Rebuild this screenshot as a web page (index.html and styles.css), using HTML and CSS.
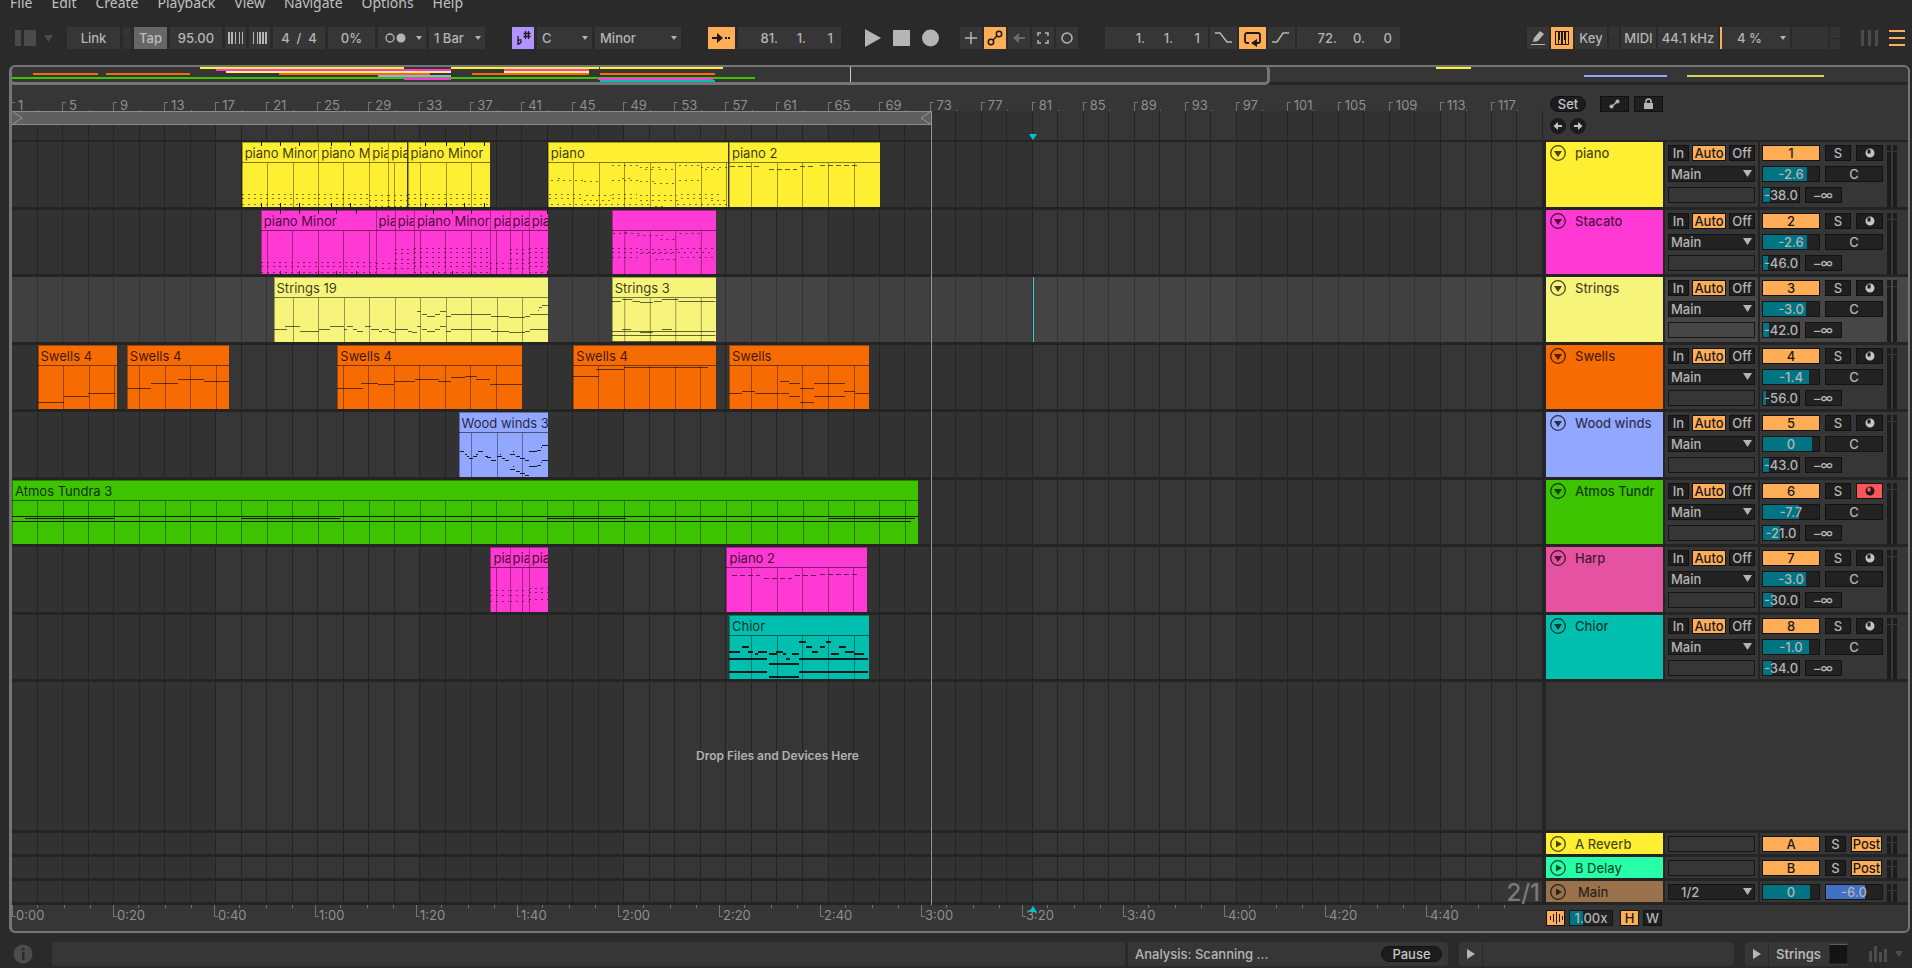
FILE: index.html
```html
<!DOCTYPE html>
<html lang="en">
<head>
<meta charset="utf-8">
<title>Arrangement</title>
<link rel="stylesheet" href="styles.css">
</head>
<body>
<nav class="menu">
  <a href="#">File</a><a href="#">Edit</a><a href="#">Create</a><a href="#">Playback</a><a href="#">View</a><a href="#">Navigate</a><a href="#">Options</a><a href="#">Help</a>
</nav>

<header class="toolbar">
  <div class="group">
    <button class="plain" aria-label="Browser"><svg width="40" height="22"><path d="M0 3h6v16h-6zM9 3h12v16h-12zM29 8h9l-4.500 7z" fill="#4a4a4a"/></svg></button>
  </div>
  <div class="group tempo">
    <button class="w-link">Link</button>
    <span class="nudge"><i></i><i></i></span>
    <button class="tap">Tap</button>
    <input class="w-tempo" value="95.00" aria-label="Tempo">
    <button class="sq" aria-label="Nudge down"><svg width="21" height="22"><path d="M4 5v12M7 5v12" stroke="#b5b5b5" stroke-width="2"/><path d="M10.500 5v12M14.500 5v12M17.500 5v12" stroke="#b5b5b5"/></svg></button>
    <button class="sq" aria-label="Nudge up"><svg width="21" height="22"><path d="M4.500 5v12M8.500 5v12" stroke="#b5b5b5"/><path d="M11 5v12M14 5v12M17 5v12" stroke="#b5b5b5" stroke-width="2"/></svg></button>
    <input class="w-tempo" value="4&nbsp; /&nbsp; 4" aria-label="Time signature">
    <input class="w-swing" value="0%" aria-label="Groove">
    <button class="w-metro" aria-label="Metronome"><svg width="48" height="22"><circle cx="12" cy="11" r="4" fill="none" stroke="#b5b5b5" stroke-width="1.300"/><circle cx="23" cy="11" r="4.500" fill="#b5b5b5"/><path d="M38 9h6l-3 4z" fill="#b5b5b5"/></svg></button>
    <span class="pick w-bar"><select aria-label="Quantization"><option>1 Bar</option></select><svg width="6" height="4"><path d="M0 0h6l-3 4z"/></svg></span>
  </div>
  <div class="group far">
    <button class="sq violet" aria-label="Scale"><svg width="22" height="22"><path d="M6 9v9M6 17.500q4-2 3-4t-3 1M13.500 4v8M16.500 4v8M11.500 6.500h7M11.500 9.500h7" stroke="#1a1a1a" stroke-width="1.300" fill="none"/></svg></button>
    <span class="pick w-root"><select aria-label="Root"><option>C</option></select><svg width="6" height="4"><path d="M0 0h6l-3 4z"/></svg></span>
    <span class="pick w-scale"><select aria-label="Scale name"><option>Minor</option></select><svg width="6" height="4"><path d="M0 0h6l-3 4z"/></svg></span>
  </div>
  <div class="group far">
    <button class="w-follow on" aria-label="Follow"><svg width="27" height="22"><path d="M4 11h7" stroke="#1a1a1a" stroke-width="2"/><path d="M9 6l6 5-6 5z" fill="#1a1a1a"/><path d="M17 10h2v2h-2zM20 10h2v2h-2z" fill="#1a1a1a"/></svg></button>
    <span class="pos"><input value="81." aria-label="Bar"><input value="1." aria-label="Beat"><input value="1" aria-label="Sixteenth"></span>
  </div>
  <div class="group transport">
    <button class="plain" aria-label="Play"><svg width="16" height="22"><path d="M0 2l16 9-16 9z" fill="#b5b5b5"/></svg></button>
    <button class="plain" aria-label="Stop"><svg width="17" height="22"><path d="M0 3h17v16H0z" fill="#b5b5b5"/></svg></button>
    <button class="plain" aria-label="Record"><svg width="17" height="22"><circle cx="8.500" cy="11" r="8.500" fill="#b5b5b5"/></svg></button>
  </div>
  <div class="group near">
    <button class="sq" aria-label="Overdub"><svg width="22" height="22"><path d="M11 5v12M5 11h12" stroke="#b5b5b5" stroke-width="1.500"/></svg></button>
    <button class="sq on" aria-label="Automation arm"><svg width="22" height="22" fill="none" stroke="#1a1a1a" stroke-width="1.500"><circle cx="7" cy="15" r="2.700"/><circle cx="15" cy="7" r="2.700"/><path d="M9 13l4-4"/></svg></button>
    <button class="sq" aria-label="Re-enable automation"><svg width="22" height="22"><path d="M8 11h9" stroke="#6a6a6a" stroke-width="2"/><path d="M11 6v10l-6-5z" fill="#6a6a6a"/></svg></button>
    <button class="sq" aria-label="Capture"><svg width="22" height="22"><path d="M6 9V6h3M13 6h3v3M16 13v3h-3M9 16H6v-3" fill="none" stroke="#b5b5b5" stroke-width="1.500"/></svg></button>
    <button class="sq" aria-label="Session record"><svg width="22" height="22"><circle cx="11" cy="11" r="5" fill="none" stroke="#b5b5b5" stroke-width="1.500"/></svg></button>
  </div>
  <div class="group far punch">
    <span class="pos"><input value="1." aria-label="Loop bar"><input value="1." aria-label="Loop beat"><input value="1" aria-label="Loop sixteenth"></span>
    <button class="w-follow" aria-label="Punch in"><svg width="27" height="22"><path d="M5 6h5l7 9h5" fill="none" stroke="#b5b5b5" stroke-width="1.500"/></svg></button>
    <button class="w-follow on" aria-label="Loop"><svg width="27" height="22"><path d="M10 16H8a2 2 0 0 1-2-2V8a2 2 0 0 1 2-2h11a2 2 0 0 1 2 2v6a2 2 0 0 1-2 2h-3" fill="none" stroke="#1a1a1a" stroke-width="1.800"/><path d="M18 12v8l-6-4z" fill="#1a1a1a"/></svg></button>
    <button class="w-follow" aria-label="Punch out"><svg width="27" height="22"><path d="M4 15h5l6-9h6" fill="none" stroke="#b5b5b5" stroke-width="1.500"/></svg></button>
    <span class="pos"><input value="72." aria-label="Length bars"><input value="0." aria-label="Length beats"><input value="0" aria-label="Length sixteenths"></span>
  </div>
  <div class="group right">
    <button class="sq" aria-label="Draw mode"><svg width="22" height="22"><path d="M6 15l1-4 6-7 4 3-6 7zM4 17h14v1H4z" fill="#b5b5b5"/></svg></button>
    <button class="sq on" aria-label="Computer keyboard"><svg width="22" height="22"><path d="M4 4h14v14H4z" fill="#1a1a1a"/><path d="M5 5h2v12H5zM15 5h2v12h-2zM8 13h2v4H8zM12 13h2v4h-2zM9 5h1v9H9zM12 5h1v9h-1z" fill="#ffad56"/></svg></button>
    <button class="w-key">Key</button>
    <span class="nudge"><i></i><i></i></span>
    <button class="w-midi">MIDI</button>
    <button class="w-rate">44.1 kHz</button>
    <button class="cpu">4 %<svg width="6" height="4"><path d="M0 0h6l-3 4z"/></svg></button>
    <span class="blank"></span>
    <span class="nudge"><i></i><i></i></span>
    <button class="plain bars" aria-label="Mixer"><svg width="17" height="22"><path d="M0 3h3v16H0zM7 3h3v16H7zM14 3h3v16h-3z" fill="#4a4a4a"/></svg></button>
    <button class="plain burger" aria-label="Arrangement view"><svg width="16" height="22"><path d="M0 3h16v2H0zM0 10h16v2H0zM0 17h16v2H0z" fill="#ffad56"/></svg></button>
  </div>
</header>

<main class="frame">
  <div class="overview"><div class="view-box"></div></div>
  <section class="arrange">
    <div class="grid"></div>
    <div class="head">
      <div class="head-time">
        <div class="ruler"></div>
        <div class="loop"><div class="loop-bar"><svg width="12" height="14"><path d="M1 1l9 6-9 6"/></svg><svg width="12" height="14"><path d="M11 1l-9 6 9 6"/></svg></div></div>
        <div class="scrub"><svg class="mark" width="8" height="6"><path d="M0 0h8l-4 6z"/></svg></div>
      </div>
      <div class="head-side">
        <div class="head-row"><button class="pill">Set</button>
          <button class="tool" aria-label="Automation mode"><svg width="27" height="14"><path d="M10 10l7-6" stroke="#b5b5b5" stroke-width="1.500"/><circle cx="10.500" cy="9.500" r="2" fill="#b5b5b5"/><circle cx="16.500" cy="4.500" r="2" fill="#b5b5b5"/></svg></button>
          <button class="tool" aria-label="Lock envelopes"><svg width="27" height="14"><path d="M9 6h9v6H9z" fill="#b5b5b5"/><path d="M11 7V4.500a2.500 2.500 0 0 1 5 0V7" fill="none" stroke="#b5b5b5" stroke-width="1.500"/></svg></button></div>
        <div class="head-row"><button class="round" aria-label="Previous locator"><svg width="16" height="16"><path d="M6 8h6" stroke="#c5c5c5" stroke-width="2"/><path d="M8 4v8L3.500 8z" fill="#c5c5c5"/></svg></button><button class="round" aria-label="Next locator"><svg width="16" height="16"><path d="M4 8h6" stroke="#c5c5c5" stroke-width="2"/><path d="M8 4v8l4.500-4z" fill="#c5c5c5"/></svg></button></div>
      </div>
    </div>
    <div class="tracks"></div>
    <div class="drop"><p>Drop Files and Devices Here</p><div class="drop-side"></div></div>
    <div class="returns">
      <div class="row small"><div class="lane"></div>
        <div class="name" style="--c:#ffef33"><button class="fold" aria-label="Unfold A"><svg width="16" height="16"><circle cx="8" cy="8" r="7.300"/><path d="M6 4.500v7l6-3.500z"/></svg></button>A Reverb</div>
        <div class="io"><input class="slot" aria-label="A input"></div>
        <div class="mix"><button class="num">A</button><button class="solo tiny">S</button><button class="post">Post</button></div></div>
      <div class="row small"><div class="lane"></div>
        <div class="name" style="--c:#26ffa8"><button class="fold" aria-label="Unfold B"><svg width="16" height="16"><circle cx="8" cy="8" r="7.300"/><path d="M6 4.500v7l6-3.500z"/></svg></button>B Delay</div>
        <div class="io"><input class="slot" aria-label="B input"></div>
        <div class="mix"><button class="num">B</button><button class="solo tiny">S</button><button class="post">Post</button></div></div>
      <div class="row small"><div class="lane zoom">2/1</div>
        <div class="name main" style="--c:#99724b"><button class="fold" aria-label="Unfold Main"><svg width="16" height="16"><circle cx="8" cy="8" r="7.300"/><path d="M6 4.500v7l6-3.500z"/></svg></button>Main</div>
        <div class="io"><span class="pick route out"><select aria-label="Main output"><option>1/2</option></select><svg width="9" height="7"><path d="M0 0h9l-4.500 7z"/></svg></span></div>
        <div class="mix"><input class="val" style="--f:84%" value="0" aria-label="Main volume"><input class="val cue" style="--f:70%" value="-6.0" aria-label="Cue volume"></div></div>
    </div>
    <div class="end-line"></div>
  </section>
  <div class="foot">
    <div class="times"></div>
    <div class="foot-side">
      <button class="wave" aria-label="Waveform"><svg width="17" height="14"><path d="M3.500 5v4M6.500 3v8M9.500 1v12M12.500 3v8M15.500 5v4" stroke="#1a1a1a"/></svg></button>
      <input class="val speed" style="--f:30%" value="1.00x" aria-label="Waveform zoom">
      <button class="hw on">H</button><button class="hw">W</button>
    </div>
  </div>
</main>

<footer class="status">
  <svg width="20" height="20"><circle cx="10" cy="10" r="9.500" fill="#4c4c4c"/><path d="M9 4h2.500v2.500H9zM9 8h2.500v8H9z" fill="#2a2a2a"/></svg>
  <div class="box info"></div>
  <div class="box scan"><span>Analysis: Scanning ...</span><button class="pill">Pause</button></div>
  <button class="box arrow first" aria-label="Show clip"><svg width="8" height="10"><path d="M0 0l8 5-8 5z"/></svg></button>
  <div class="box clipinfo"></div>
  <button class="box arrow second" aria-label="Show devices"><svg width="8" height="10"><path d="M0 0l8 5-8 5z"/></svg></button>
  <div class="box device">Strings<span></span></div>
  <svg class="levels" width="36" height="20"><path d="M1 7h3v11H1zM6 2h3v16H6zM11 8h3v10h-3zM16 5h3v13h-3zM27 7h8l-4 6z" fill="#4c4c4c"/></svg>
</footer>
<script src="app.js"></script>
</body>
</html>
```
FILE: styles.css
```css
* { box-sizing: border-box; }
body {
  margin: 0; height: 100vh; display: flex; flex-direction: column; overflow: hidden;
  background: #2a2a2a; color: #b5b5b5; font: 500 13px/16px Inter, "Open Sans", sans-serif;
}
button, input, select {
  font: inherit; color: inherit; border: 0; padding: 0; margin: 0; border-radius: 0;
  background: #363636; appearance: none; min-width: 0; outline: 0;
}
svg { display: block; flex: none; }
input { text-align: center; white-space: pre; }

.menu { display: flex; gap: 19px; height: 27px; padding-left: 10px; overflow: hidden; flex: none; }
.menu a { color: #c0c0c0; text-decoration: none; font: 400 14px/20px "Noto Sans", sans-serif; margin-top: -7px; }

.toolbar { display: flex; height: 22px; margin-bottom: 16px; padding: 0 7px 0 15px; flex: none; }
.toolbar button, .toolbar input, .toolbar select { height: 22px; }
.group { display: flex; gap: 3px; }
.group.tempo { margin-left: 12px; }
.group.far { margin-left: 27px; }
.group.near { margin-left: 21px; gap: 2px; }
.group.transport { margin-left: 24px; gap: 12px; }
.group.punch { gap: 2px; }
.group.right { margin-left: auto; gap: 2px; }
.plain, .toolbar .plain { background: none; }
.w-link { width: 53px; }
.tap { width: 33px; background: #666; color: #bbb; }
.w-tempo { width: 52px; }
.sq { width: 22px; display: flex; justify-content: center; }
.tempo .sq { width: 21px; }
.w-swing { width: 47px; }
.w-metro { width: 48px; }
.w-bar { width: 56px; }
.w-root { width: 55px; }
.w-scale { width: 86px; }
.w-follow { width: 27px; }
.w-key { width: 32px; }
.w-midi { width: 35px; }
.w-rate { width: 60px; }
.cpu { width: 70px; border-left: 2px solid #ffad56; display: flex; align-items: center; justify-content: space-between; padding: 0 4px 0 15px; }
.cpu svg { fill: #b5b5b5; }
.blank { width: 36px; background: #333; }
.bars { margin-left: 19px; }
.burger { margin-left: 9px; }
.on { background: #ffad56; color: #1a1a1a; }
.violet { background: #b394ff; }
.nudge { display: grid; grid-template-rows: 1fr 1fr; gap: 1px; width: 10px; }
.tempo .nudge { width: 8px; }
.nudge i { background: #333; }
.pos { display: flex; width: 103px; background: #363636; }
.pos input { text-align: right; width: 28px; background: none; }
.pos input:first-child { width: 40px; }
.pos input:last-child { width: 27px; }
.pick { position: relative; display: flex; }
.pick select { width: 100%; padding-left: 5px; }
.pick svg { position: absolute; right: 4px; top: 50%; margin-top: -2px; fill: #b5b5b5; pointer-events: none; }

.frame {
  flex: 1; min-height: 0; margin: 0 2px 9px 9px; display: flex; flex-direction: column;
  border: 2px solid #757575; border-left-width: 3px; border-radius: 6px; background: #363636; overflow: hidden;
}
.overview { position: relative; height: 18px; border-bottom: 3px solid #262626; flex: none; }
.overview i { position: absolute; height: 2px; }
.overview b { position: absolute; top: 0; width: 1px; height: 15px; left: 44.200%; background: #c8c8c8; }
.view-box { position: absolute; left: -3px; top: -2px; bottom: -3px; width: 66.500%; border: 2px solid #757575; border-width: 2px 3px 3px; border-radius: 5px; }

.arrange { position: relative; flex: 1; min-height: 0; display: flex; flex-direction: column; }
.grid { position: absolute; left: 0; right: 365px; top: 26px; bottom: 0; display: flex; }
.grid i { flex: 1; border-right: 1px solid #242424; background: #323232; }
.grid i.lit { background: #363636; }

.head { position: relative; display: flex; flex: none; }
.head-time { flex: 1; min-width: 0; }
.ruler { height: 26px; display: flex; color: #8f8f8f; font-weight: 400; }
.ruler span { position: relative; flex: 1 1 0; width: 0; padding: 12px 0 0 6px; }
.ruler span::before { content: ""; position: absolute; left: -1px; bottom: 0; width: 3px; height: 8px; border: solid #757575; border-width: 1px 0 0 1px; }
.ruler span::after { content: ""; position: absolute; left: 50%; bottom: 0; width: 1px; height: 1px; background: #757575; }
.loop { height: 14px; }
.loop-bar { width: 60%; height: 14px; display: flex; justify-content: space-between; background: #5f5f5f; border: solid #8c8c8c; border-width: 1px 0; }
.loop-bar svg { margin-top: -1px; fill: none; stroke: #9a9a9a; }
.scrub { position: relative; height: 17px; border-bottom: 2px solid #242424; }
.mark { position: absolute; left: 66.667%; bottom: 0; margin-left: -4px; fill: #00c2d4; }
.head-side { width: 365px; padding: 11px 0 0 7px; display: flex; flex-direction: column; gap: 6px; border-bottom: 2px solid #242424; background: #363636; }
.head-row { display: flex; gap: 4px; }
.pill { height: 16px; line-height: 14px; border-radius: 8px; background: #1c1c1c; border: 1px solid #121212; width: 36px; color: #c5c5c5; }
.head-row .pill { margin-right: 10px; }
.tool { width: 29px; height: 16px; background: #1e1e1e; border: 1px solid #121212; }
.head-row .tool + .tool { margin-left: 1px; }
.round { width: 16px; height: 16px; border-radius: 8px; background: #1c1c1c; }

.row { position: relative; display: grid; grid-template-columns: minmax(0, 1fr) 120px 95px 150px; grid-template-rows: 100%; height: 68px; }
.tracks .row:nth-child(even) { height: 67px; }
.lane { position: relative; border-bottom: 3px solid #242424; }
.selected .lane { background: rgba(255, 255, 255, .07); }
.name {
  display: flex; gap: 9px; align-items: flex-start; padding: 3px 4px; white-space: nowrap; overflow: hidden;
  background: var(--c); background-clip: padding-box; color: rgba(0, 0, 0, .72); border: solid #242424; border-width: 0 0 3px 3px;
}
.name.main { gap: 12px; }
.fold { background: none; height: 16px; }
.fold svg { fill: none; stroke: rgba(0, 0, 0, .72); stroke-width: 1.300; }
.fold path { fill: rgba(0, 0, 0, .72); stroke: none; }
.io, .mix { background: #363636; border: solid #242424; border-width: 0 0 3px 2px; display: flex; flex-wrap: wrap; align-content: flex-start; gap: 5px 3px; padding: 3px; }
.selected .io, .selected .mix { background: #464646; }
.mix { position: relative; gap: 5px; padding: 3px 25px 0 2px; }
.io button, .mix button, .foot-side button { height: 16px; line-height: 14px; background: #1e1e1e; border: 1px solid #121212; overflow: hidden; }
.io .in { width: 21px; }
.io .auto, .mix .num, .mix .post, .foot-side .on, .foot-side .wave { background: #ffad56; color: #1a1a1a; }
.io .auto { width: 34px; }
.io .off { width: 26px; }
.slot { width: 87px; height: 16px; background: none; border: 1px solid #161616; }
.route { width: 87px; height: 16px; }
.route select { background: #222; border: 1px solid #141414; padding-left: 2px; line-height: 14px; }
.route svg { right: 3px; margin-top: -4px; }
.out select { padding-left: 12px; }
.mix .num { width: 58px; }
.mix .solo { width: 26px; }
.mix .tiny { width: 21px; }
.mix .rec { width: 27px; display: flex; justify-content: center; fill: #c5c5c5; }
.mix .rec.armed { background: #ff5559; fill: #1a1a1a; }
.mix .pan { width: 58px; background: #222; }
.mix .inf { width: 37px; background: #222; }
.mix .post { width: 31px; }
.val { width: 58px; height: 16px; border: 1px solid #141414; background: linear-gradient(90deg, #007483 var(--f), #222 var(--f)); }
.val.send { width: 38px; }
.val.cue { background: linear-gradient(90deg, #4170c4 var(--f), #222 var(--f)); }
.meter { position: absolute; right: 11px; top: 3px; bottom: 0; width: 10px; display: flex; gap: 2px; }
.meter i { flex: 1; background: linear-gradient(#1c1c1c 6px, #3a3a3a 6px 7px, #1c1c1c 7px); }
.small .mix { padding: 3px 16px 0 2px; }

.clip { position: absolute; top: 0; bottom: 0; overflow: hidden; background: var(--c); color: rgba(0, 0, 0, .78); font-weight: 400; box-shadow: inset 1px 1px rgba(0, 0, 0, .35); }
.clip span { display: block; height: 20px; padding: 3px 0 0 3px; white-space: nowrap; overflow: hidden; }
.clip svg { width: 100%; height: 45px; border-top: 1px solid rgba(0, 0, 0, .5); shape-rendering: crispEdges; }
.clip path { fill: none; stroke: #000; vector-effect: non-scaling-stroke; }
.clip .lines { stroke-opacity: .38; }
.clip .soft { stroke-opacity: .6; }
.clip .hard { stroke-opacity: .85; }
.clip .thick { stroke-opacity: .85; stroke-width: 2; }
.clip .dots { stroke-dasharray: 2 4; stroke-opacity: .5; }
.clip .dashes { stroke-dasharray: 5 3; stroke-opacity: .6; }
.tick { position: absolute; top: 0; width: 1px; height: 65px; background: linear-gradient(#111 4px, transparent 4px 61px, #111 61px); }
.cursor { position: absolute; left: 66.667%; top: 0; bottom: 0; width: 1px; background: #45c6d2; }

.drop { position: relative; flex: 1; display: grid; grid-template-columns: 1fr 365px; align-items: center; border-bottom: 3px solid #242424; min-height: 0; }
.drop p { margin: 0; text-align: center; color: #b0b0b0; font-size: 12px; font-weight: 600; }
.drop-side { align-self: stretch; background: #363636; border-left: 3px solid #242424; }
.row.small { height: 24px; }
.zoom { text-align: right; font-size: 24px; line-height: 23px; padding-right: 3px; color: #7a7a7a; }
.end-line { position: absolute; top: 26px; bottom: 0; left: 0; right: 365px; pointer-events: none; }
.end-line::before { content: ""; position: absolute; left: 60%; top: 0; bottom: 0; width: 1px; background: #9a9a9a; }

.foot { display: flex; height: 26px; flex: none; }
.times { position: relative; flex: 1; min-width: 0; display: flex; overflow: hidden; color: #8f8f8f; font-weight: 400; }
.times span { position: relative; flex: none; width: 6.597%; padding: 2px 0 0 4px; }
.times span::before { content: ""; position: absolute; left: 0; top: 0; width: 3px; height: 11px; border: solid #757575; border-width: 0 0 1px 1px; }
.times span::after { content: ""; position: absolute; left: 25%; top: 0; width: calc(50% + 1px); height: 3px; border: solid #757575; border-width: 0 1px; background: linear-gradient(#757575, #757575) center / 1px 3px no-repeat; }
.times .mark { top: 1px; bottom: auto; }
.foot-side { width: 365px; padding: 5px 0 0 3px; display: flex; gap: 4px; }
.foot-side .wave, .foot-side .hw { width: 19px; }
.val.speed { width: 44px; }
.foot-side .on { margin-left: 3px; }

.status { display: flex; align-items: center; height: 24px; margin-bottom: 2px; padding: 0 8px 0 13px; flex: none; }
.box { height: 24px; background: #363636; display: flex; align-items: center; }
.info { flex: 1; margin: 0 3px 0 19px; border-radius: 4px 0 0 4px; }
.scan { width: 320px; padding: 0 6px 0 7px; justify-content: space-between; border-radius: 0 4px 4px 0; }
.scan .pill { width: 61px; }
.arrow { width: 23px; justify-content: center; fill: #b5b5b5; border-radius: 4px 0 0 4px; }
.arrow.first { margin-left: 11px; }
.clipinfo { width: 251px; margin-left: 1px; border-radius: 0 4px 4px 0; }
.arrow.second { margin-left: 11px; }
.device { width: 79px; margin-left: 1px; padding-left: 7px; font-weight: 600; justify-content: space-between; }
.device span { width: 19px; height: 20px; background: #141414; border: 1px solid #262626; border-top-color: #55606a; }
.levels { margin-left: 20px; }
```
FILE: app.js
```js
// Arrangement data: positions in bars, note heights in pixels inside a clip body.
const BARS = 120, OVERVIEW_BARS = 181.3;
const Y = '#ffef33', M = '#ff39d4', P = '#f7f47c', O = '#f76c02', B = '#92a7ff', G = '#3dc300', T = '#00bfaf';
const rep = (ys, a, b) => ys.map(y => [y, a, b]);
const A1 = [31, 35, 41], A2 = [32, 37, 43], B2 = [18, 22, 28, 32, 37, 43], B3 = [17, 21, 26, 31, 35, 41];
const dots = (name, a, b, ys, ticks = []) => ({ name, a, b, dots: rep(ys, a, b), ticks });

const tracks = [
  { name: 'piano', c: Y, vol: '-2.6', f: 79, send: '-38.0', sf: 20, clips: [
    dots('piano Minor', 18, 24, A1, [19.5, 21, 22.5]), dots('piano Minor', 24, 28, A1, [25, 26.5]),
    dots('piano', 28, 29.5, A2), dots('piano', 29.5, 31, A2), dots('piano Minor', 31, 37.5, A1, [32.4, 34, 35.4, 37]),
    { name: 'piano', a: 42, b: 56.1, dots: [[2,47,49.2],[4,49.2,51],[6,49.6,50.2],[6,50.7,52.1],[2,52.3,54.1],[4,54,56],[6,54.3,55.7],
      [17,42.2,44.9],[18,44.8,46],[15,42.8,43],[17,47,49.2],[15,47.8,48.4],[18,49.2,50.6],[20,50.3,52.1],[17,52.3,54.1],
      [31,42.1,44.6],[31,47,49],[31,52.4,55.6],[32,45,46.9],[32,49.2,52.1],[35,42.1,44.8],[35,47,49],[35,52.4,55],
      [37,44.8,46.9],[37,49.2,52.2],[37,54.8,56],[41,42.2,50.2],[43,50.4,51.2],[41,52.1,56]] },
    { name: 'piano 2', a: 56.2, b: 68, dashes: [[3,56.3,58.6],[6,59.3,61.5],[3,61.8,63],[2,63.3,66.5]] } ] },
  { name: 'Stacato', c: M, vol: '-2.6', f: 79, send: '-46.0', sf: 14, clips: [
    dots('piano Minor', 19.5, 28.5, A1, [21, 22.5, 24, 25.4, 27]), dots('piano', 28.5, 30, A2), dots('piano', 30, 31.5, B2),
    dots('piano Minor', 31.5, 37.5, B3, [33, 34.5, 36]), dots('piano', 37.5, 39, A2), dots('piano', 39, 40.5, B2), dots('piano', 40.5, 42, B3, [41.9]),
    { name: '', a: 47, b: 55.2, dots: [[2,47.1,49.2],[1,48,48.5],[4,49,51],[8,50.8,52],[2,52.3,54.1],[17,47,49],[17,52.4,55],[18,49.2,52.2],[21,47,55],[26,47,49],[22,49.2,52],[26,52.4,55],[28,50.4,52]] } ] },
  { name: 'Strings', c: P, vol: '-3.0', f: 76, send: '-42.0', sf: 17, selected: true, clips: [
    { name: 'Strings 19', a: 20.5, b: 42, soft: [[31,20.5,21.5],[28,21.4,22.5],[33,22.5,24],[31,24,24.9],[28,24.9,26],[31,26,26.2],[28,26.2,26.7],[31,26.7,27],[33,27,27.5],
      [28,27.6,28.1],[31,28.1,28.7],[33,28.7,29],[31,29,29.5],[33,29.5,29.7],[34,29.7,30],[31,30,31],[33,31,31.3],[34,31.3,31.7],[28,31.7,32],[31,32.1,32.5],[33,32.5,33.1],
      [31,33.1,33.5],[28,33.5,34],[33,34,34.4],[31,34.4,37.5],[33,37.5,38.9],[34,38.9,40.2],[33,40.2,40.6],[31,40.6,42],
      [13,31.7,32],[16,32.1,32.5],[18,32.5,33.1],[16,33.1,33.5],[13,33.5,34],[18,34,34.4],[16,34.4,37.5],[18,37.5,38.9],[19,38.9,40.2],[18,40.2,40.6],[16,40.6,42],[12,41.2,41.3],[9,41.3,41.5],[7,41.5,42]] },
    { name: 'Strings 3', a: 47, b: 55.2, soft: [[1,47.8,48.6],[3,47,47.7],[3,48.6,49.2],[4,49.2,50.2],[3,50.3,50.9],[1,50.9,52.2],[3,52.2,55.1],[31,47.8,48.5],[31,50.9,51.7],[34,49.2,50.2],[33,47,55.1],[37,47,55.1],[43,47,55.1]] } ] },
  { name: 'Swells', c: O, vol: '-1.4', f: 83, send: '-56.0', sf: 7, clips: [
    { name: 'Swells 4', a: 2, b: 8.2, soft: [[36,2,4],[30,4,6],[27,5.9,8]] },
    { name: 'Swells 4', a: 9, b: 17, soft: [[22,9,10.9],[17,10.9,13],[13,13,15],[15,15,17]] },
    { name: 'Swells 4', a: 25.5, b: 40, soft: [[22,25.5,27.5],[17,27.4,28.7],[18,28.7,30],[15,30,31.6],[13,31.6,33.5],[15,33.4,34.4],[11,34.4,35.5],[10,35.5,36.5],[13,36.4,37.5],[18,37.5,40]] },
    { name: 'Swells 4', a: 44, b: 55.2, soft: [[10,44,46],[3,45.8,48],[1,48,54.6]] },
    { name: 'Swells', a: 56.2, b: 67.2, soft: [[27,56.2,57.2],[25,57.2,58.2],[27,58.2,60.2],[15,60.2,60.9],[27,60.3,60.9],[17,60.9,61.8],[30,60.9,61.8],[22,61.8,62.9],[36,61.8,62.9],[17,62.9,65.3],[30,62.9,65.3],[25,65.2,66.1],[27,66.1,67.2]] } ] },
  { name: 'Wood winds', c: B, vol: '0', f: 87, send: '-43.0', sf: 16, clips: [
    { name: 'Wood winds 3', a: 35, b: 42, hard: [[18,35.1,35.4],[21,35.5,35.6],[23,35.6,35.8],[25,35.8,36.1],[23,36.1,36.4],[21,36.3,36.5],[18,36.5,36.9],[23,37,37.3],[24,37.2,37.5],[27,37.5,37.9],[23,38,38.4],[21,38.2,38.3],[25,38.4,38.6],[27,38.6,38.9],
      [21,39,39.4],[18,39.2,39.3],[23,39.5,39.8],[25,39.8,40.2],[27,40.2,40.5],[18,40.5,41.1],[17,41.1,41.4],[14,41.4,41.5],[12,41.5,42],
      [36,39,39.4],[33,39.2,39.3],[38,39.5,39.8],[40,39.8,40.2],[42,40.2,40.5],[33,40.5,41.1],[32,41.1,41.4],[29,41.4,41.5],[27,41.5,42]] } ] },
  { name: 'Atmos Tundr', c: G, vol: '-7.7', f: 65, send: '-21.0', sf: 46, armed: true, clips: [
    { name: 'Atmos Tundra 3', a: 0, b: 71, hard: [[15,0,71],[20,0,70.5],[17,1,8],[17,18,25.7],[17,41.9,48.1],[17,64,70.8]] } ] },
  { name: 'Harp', c: '#e553a0', vol: '-3.0', f: 76, send: '-30.0', sf: 28, clips: [
    { ...dots('piano', 37.5, 39, [22, 27, 33]), c: M }, { ...dots('piano', 39, 40.5, [22, 27, 33]), c: M }, { ...dots('piano', 40.5, 42, [20, 24, 31]), c: M },
    { name: 'piano 2', a: 56, b: 67, c: M, dashes: [[7,56.5,58.7],[10,59,61.2],[7,61.4,63.3],[6,63.4,66.3]] } ] },
  { name: 'Chior', c: T, vol: '-1.0', f: 83, send: '-34.0', sf: 24, clips: [
    { name: 'Chior', a: 56.2, b: 67.2, thick: [[5,61.7,62.2],[5,63.8,64.2],[10,57.2,57.8],[10,62.2,62.7],[10,63.3,63.7],[10,64.8,65.4],[15,56.2,57.1],[15,57.7,58.1],[15,58.5,59.2],[15,59.9,60.4],[15,62.7,63.2],[15,65.3,66],
      [17,58.2,58.5],[17,59.3,60],[17,60.4,60.7],[17,61.1,61.7],[17,64.2,64.8],[17,66,66.8],[22,56.2,59.2],[22,60.7,61],[22,61.7,67.1],[27,59.3,61.7],[35,56.2,59.2],[35,61.7,67.1],[40,59.3,61.7]] } ] }
];

const pct = (v, total = BARS) => (v / total * 100).toFixed(3) + '%';
const line = ([y, a, b]) => `M${a} ${y + .5}H${b}`;

function clipHtml(c, color) {
  let grid = '';
  for (let x = Math.floor(c.a / 2) * 2 + 2; x < c.b; x += 2) grid += `M${x} 0V44`;
  const notes = ['soft', 'hard', 'thick', 'dots', 'dashes'].filter(k => c[k])
    .map(k => `<path class="${k}" d="${c[k].map(line).join('')}"/>`).join('');
  return `<div class="clip" style="--c:${c.c || color};left:${pct(c.a)};width:${pct(c.b - c.a)}"><span>${c.name}</span>` +
    `<svg viewBox="${c.a} 0 ${c.b - c.a} 44" preserveAspectRatio="none"><path class="lines" d="${grid}"/>${notes}</svg></div>` +
    (c.ticks || []).map(t => `<i class="tick" style="left:${pct(t)}"></i>`).join('');
}

document.querySelector('.tracks').innerHTML = tracks.map((t, i) => `
<div class="row${t.selected ? ' selected' : ''}">
  <div class="lane">${t.clips.map(c => clipHtml(c, t.c)).join('')}${t.selected ? '<i class="cursor"></i>' : ''}</div>
  <div class="name" style="--c:${t.c}"><button class="fold" aria-label="Fold ${t.name}"><svg width="16" height="16"><circle cx="8" cy="8" r="7.3"/><path d="M4 6h8l-4 6z"/></svg></button>${t.name}</div>
  <div class="io"><button class="in">In</button><button class="auto">Auto</button><button class="off">Off</button>
    <span class="pick route"><select aria-label="${t.name} output"><option>Main</option></select><svg width="9" height="7"><path d="M0 0h9l-4.5 7z"/></svg></span>
    <input class="slot" aria-label="${t.name} output channel"></div>
  <div class="mix"><button class="num">${i + 1}</button><button class="solo">S</button>
    <button class="rec${t.armed ? ' armed' : ''}" aria-label="Arm ${t.name}"><svg width="14" height="14"><path fill-rule="evenodd" d="M7 2.500a4.500 4.500 0 1 1 0 9a4.500 4.500 0 1 1 0-9zM4.500 3.500h3v4h-3z"/></svg></button>
    <input class="val" style="--f:${t.f}%" value="${t.vol}" aria-label="${t.name} volume"><button class="pan">C</button>
    <input class="val send" style="--f:${t.sf}%" value="${t.send}" aria-label="${t.name} send A"><button class="inf">–∞</button>
    <span class="meter"><i></i><i></i></span></div>
</div>`).join('');

document.querySelectorAll('.small .mix').forEach(m => m.insertAdjacentHTML('beforeend', '<span class="meter"><i></i><i></i></span>'));
document.querySelector('.grid').innerHTML = Array.from({ length: 60 }, (_, i) => `<i${Math.floor(i / 8) % 2 ? ' class="lit"' : ''}></i>`).join('');
document.querySelector('.ruler').innerHTML = Array.from({ length: 30 }, (_, i) => `<span>${i * 4 + 1}</span>`).join('');
document.querySelector('.times').innerHTML = Array.from({ length: 15 }, (_, i) => `<span>${Math.floor(i / 3)}:${['00', '20', '40'][i % 3]}</span>`).join('') +
  '<svg class="mark" width="8" height="6"><path d="M0 6h8l-4-6z"/></svg>';

const bar = (row, a, b, c) => `<i style="top:${row * 2 - (row > 5 ? 1 : 0)}px;left:${pct(a, OVERVIEW_BARS)};width:${pct(b - a, OVERVIEW_BARS)};background:${c}"></i>`;
document.querySelector('.overview').insertAdjacentHTML('beforeend',
  tracks.map((t, r) => t.clips.map(c => bar(r, c.a, c.b, c.c || t.c)).join('')).join('') +
  bar(0, 136.2, 139.5, Y) + bar(4, 150.3, 158.3, B) + bar(4, 160.2, 173.3, '#d8d455') + '<b></b>');
```
